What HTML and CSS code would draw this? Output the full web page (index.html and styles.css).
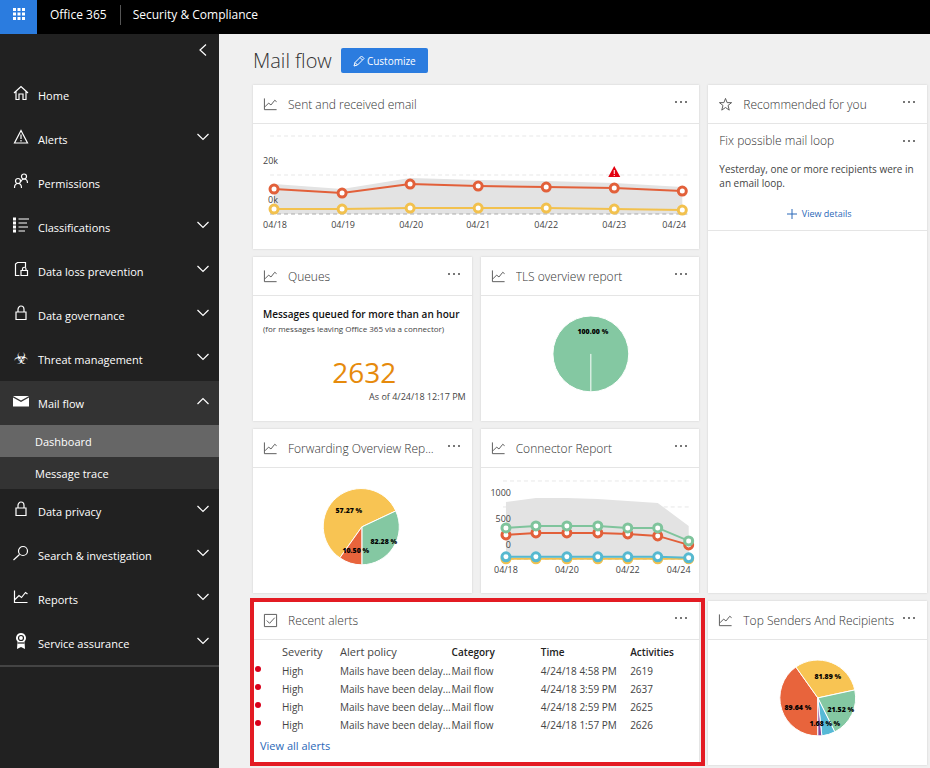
FILE: index.html
```
<!DOCTYPE html>
<html lang="en">
<head>
    <meta charset="UTF-8">
    <meta name="viewport" content="width=device-width, initial-scale=1">
    <title>Mail flow - Security &amp; Compliance</title>
    <link rel="stylesheet" href="styles.css">
</head>
<body>
    <!-- shared icons -->
    <svg class="sprite" aria-hidden="true">
        <symbol id="chart" viewBox="0 0 16 16"><path d="M1.5 1.5v12h13M2 10.5l4-4 2.5 2 4-5 2 1.5"/></symbol>
        <symbol id="down" viewBox="0 0 16 16"><path d="M2.500 5l5.500 5.500L13.500 5"/></symbol>
        <symbol id="up" viewBox="0 0 16 16"><path d="M2.500 11L8 5.500l5.500 5.500"/></symbol>
        <symbol id="left" viewBox="0 0 16 16"><path d="M11 2.500L5 8l6 5.500"/></symbol>
        <symbol id="dots" viewBox="0 0 16 4"><path d="M2 1h2v2H2zM7 1h2v2H7zM12 1h2v2h-2z"/></symbol>
        <symbol id="lock" viewBox="0 0 16 16"><path d="M3 7h10v7.500H3zM5 7V4.500a3 3.500 0 0 1 6 0V7"/></symbol>
    </svg>

    <header class="topbar">
        <button class="launcher" type="button" aria-label="App launcher">
            <svg viewBox="0 0 12 12" width="12" height="12"><path d="M0 0h3v3H0zM4.500 0h3v3h-3zM9 0h3v3H9zM0 4.500h3v3H0zM4.500 4.500h3v3h-3zM9 4.500h3v3H9zM0 9h3v3H0zM4.500 9h3v3h-3zM9 9h3v3H9z"/></svg>
        </button>
        <a class="brand" href="#">Office 365</a>
        <a class="product" href="#">Security &amp; Compliance</a>
    </header>

    <div class="layout">
        <nav class="sidebar">
            <button class="collapse" type="button" aria-label="Collapse menu"><svg class="icon"><use href="#left"/></svg></button>
            <ul class="menu">
                <li><a class="item" href="#"><svg class="icon" viewBox="0 0 16 16"><path d="M1 8l7-6.500L15 8M3 6.500v8h3V9h4v5.500h3v-8"/></svg><span>Home</span></a></li>
                <li><a class="item" href="#"><svg class="icon" viewBox="0 0 16 16"><path d="M8 1.500L14.500 14h-13zM8 5.500v4.500M8 11v1.500"/></svg><span>Alerts</span><svg class="icon arrow"><use href="#down"/></svg></a></li>
                <li><a class="item" href="#"><svg class="icon" viewBox="0 0 16 16"><circle cx="11" cy="3.500" r="2.500"/><circle cx="5" cy="8" r="2.500"/><path d="M8 8.500c.5-1.500 1.500-2.500 3-2.500 2 0 3.500 1.500 3.500 4M1.500 15c0-3 1.500-4.500 3.500-4.500S8.500 12 8.500 15"/></svg><span>Permissions</span></a></li>
                <li><a class="item" href="#"><svg class="icon" viewBox="0 0 16 16"><path d="M5.500 2H16M5.500 6H14M5.500 10H15M5.500 14H12"/><path class="thick" d="M1.500 .5v3M1.500 4.500v3M1.500 8.500v3M1.500 12.500v3"/></svg><span>Classifications</span><svg class="icon arrow"><use href="#down"/></svg></a></li>
                <li><a class="item" href="#"><svg class="icon" viewBox="0 0 16 16"><path d="M6.500 14.500h-4V3l2-1.500h8V6M8 9.500h6.500v5H8zM9.500 9.500V8a1.500 1.500 0 0 1 3.500 0v1.500"/></svg><span>Data loss prevention</span><svg class="icon arrow"><use href="#down"/></svg></a></li>
                <li><a class="item" href="#"><svg class="icon"><use href="#lock"/></svg><span>Data governance</span><svg class="icon arrow"><use href="#down"/></svg></a></li>
                <li><a class="item" href="#"><i class="icon glyph" aria-hidden="true">&#9763;</i><span>Threat management</span><svg class="icon arrow"><use href="#down"/></svg></a></li>
                <li class="open">
                    <a class="item" href="#"><svg class="icon" viewBox="0 0 16 16"><path class="solid" d="M0 3h16L8 7.500zM0 4.500l8 4.500 8-4.500V13.500H0z"/></svg><span>Mail flow</span><svg class="icon arrow"><use href="#up"/></svg></a>
                    <ul class="submenu">
                        <li><a class="active" href="#">Dashboard</a></li>
                        <li><a href="#">Message trace</a></li>
                    </ul>
                </li>
                <li><a class="item" href="#"><svg class="icon"><use href="#lock"/></svg><span>Data privacy</span><svg class="icon arrow"><use href="#down"/></svg></a></li>
                <li><a class="item" href="#"><svg class="icon" viewBox="0 0 16 16"><circle cx="10" cy="6" r="4.500"/><path d="M6.500 9.500L.5 15"/></svg><span>Search &amp; investigation</span><svg class="icon arrow"><use href="#down"/></svg></a></li>
                <li><a class="item" href="#"><svg class="icon"><use href="#chart"/></svg><span>Reports</span><svg class="icon arrow"><use href="#down"/></svg></a></li>
                <li><a class="item" href="#"><svg class="icon" viewBox="0 0 16 16"><path class="solid" d="M8 0a5 5 0 0 1 3.500 8.500L12 16l-4-2-4 2 .5-7.500A5 5 0 0 1 8 0z"/><circle class="ring" cx="8" cy="5" r="2.500"/><path class="ring" d="M4.500 10h7"/></svg><span>Service assurance</span><svg class="icon arrow"><use href="#down"/></svg></a></li>
            </ul>
        </nav>

        <main class="content">
            <div class="page-head">
                <h1>Mail flow</h1>
                <button class="customize" type="button"><svg viewBox="0 0 12 12" width="12" height="12"><path d="M1 11l1-3.500L8.500 1l2.500 2.500L4.500 10zM7 2.500L9.500 5M2 7.500L4.500 10"/></svg>Customize</button>
            </div>

            <div class="cards">
                <section class="card wide">
                    <header><svg class="icon"><use href="#chart"/></svg><h2>Sent and received email</h2><button class="more" type="button" aria-label="More"><svg><use href="#dots"/></svg></button></header>
                    <svg class="plot" viewBox="0 0 446 125">
                        <path class="area" d="M21 60L89 65 157 54 225 56 293 57 361 59 429 63V90H21z"/>
                        <path class="grid" d="M17 12H434M17 51H434"/>
                        <path class="grid base" d="M17 90H434"/>
                        <text x="10" y="40">20k</text>
                        <text x="15" y="79">0k</text>
                        <g class="red"><path d="M21 65L89 69 157 60 225 62 293 63 361 64 429 67"/><circle cx="21" cy="65" r="4"/><circle cx="89" cy="69" r="4"/><circle cx="157" cy="60" r="4"/><circle cx="225" cy="62" r="4"/><circle cx="293" cy="63" r="4"/><circle cx="361" cy="64" r="4"/><circle cx="429" cy="67" r="4"/></g>
                        <g class="yellow"><path d="M21 85L89 85 157 84 225 84 293 84 361 85 429 86"/><circle cx="21" cy="85" r="4"/><circle cx="89" cy="85" r="4"/><circle cx="157" cy="84" r="4"/><circle cx="225" cy="84" r="4"/><circle cx="293" cy="84" r="4"/><circle cx="361" cy="85" r="4"/><circle cx="429" cy="86" r="4"/></g>
                        <path class="warn" d="M361 42l6 11h-12z"/><path class="warn-mark" d="M361 46v4M361 51v1"/>
                        <g class="dates"><text x="22" y="104">04/18</text><text x="90" y="104">04/19</text><text x="158" y="104">04/20</text><text x="225" y="104">04/21</text><text x="293" y="104">04/22</text><text x="361" y="104">04/23</text><text x="421" y="104">04/24</text></g>
                    </svg>
                </section>

                <section class="card tall">
                    <header><svg class="icon" viewBox="0 0 16 16"><path d="M8 1.500l1.700 4.500h4.800l-3.800 3 1.300 5L8 11.200 4 14l1.300-5-3.800-3h4.800z"/></svg><h2>Recommended for you</h2><button class="more" type="button" aria-label="More"><svg><use href="#dots"/></svg></button></header>
                    <div class="tip">
                        <div class="tip-head"><h3>Fix possible mail loop</h3><button class="more" type="button" aria-label="More"><svg><use href="#dots"/></svg></button></div>
                        <p>Yesterday, one or more recipients were in an email loop.</p>
                        <a class="details" href="#"><svg viewBox="0 0 10 10" width="10" height="10"><path d="M5 0v10M0 5h10"/></svg>View details</a>
                    </div>
                </section>

                <section class="card">
                    <header><svg class="icon"><use href="#chart"/></svg><h2>Queues</h2><button class="more" type="button" aria-label="More"><svg><use href="#dots"/></svg></button></header>
                    <div class="queue">
                        <strong>Messages queued for more than an hour</strong>
                        <small>(for messages leaving Office 365 via a connector)</small>
                        <div class="count">2632</div>
                        <div class="asof">As of 4/24/18 12:17 PM</div>
                    </div>
                </section>

                <section class="card">
                    <header><svg class="icon"><use href="#chart"/></svg><h2>TLS overview report</h2><button class="more" type="button" aria-label="More"><svg><use href="#dots"/></svg></button></header>
                    <svg class="plot pie" viewBox="0 0 219 125">
                        <circle class="p-green" cx="110" cy="58" r="38"/>
                        <path class="cut" d="M110 58v38"/>
                        <text x="112" y="38">100.00 %</text>
                    </svg>
                </section>

                <section class="card">
                    <header><svg class="icon"><use href="#chart"/></svg><h2>Forwarding Overview Rep...</h2><button class="more" type="button" aria-label="More"><svg><use href="#dots"/></svg></button></header>
                    <svg class="plot pie" viewBox="0 0 219 125">
                        <path class="p-yellow" d="M109 59L87 90A38 38 0 1 1 143 43z"/>
                        <path class="p-green" d="M109 59L143 43A38 38 0 0 1 109 97z"/>
                        <path class="p-red" d="M109 59V97A38 38 0 0 1 87 90z"/>
                        <text x="96" y="45">57.27 %</text>
                        <text x="131" y="76">82.28 %</text>
                        <text x="103" y="85">10.50 %</text>
                    </svg>
                </section>

                <section class="card">
                    <header><svg class="icon"><use href="#chart"/></svg><h2>Connector Report</h2><button class="more" type="button" aria-label="More"><svg><use href="#dots"/></svg></button></header>
                    <svg class="plot" viewBox="0 0 219 125">
                        <path class="grid" d="M22 13H211M22 39H211"/>
                        <path class="area" d="M25 34L55 30H86L117 31 147 33 177 35 208 58V91H25z"/>
                        <path class="grid base" d="M22 91H211"/>
                        <g class="values"><text x="30" y="28">1000</text><text x="30" y="54">500</text><text x="30" y="80">0</text></g>
                        <g class="yellow"><path d="M25 91H208"/><circle cx="25" cy="91" r="4"/><circle cx="55" cy="91" r="4"/><circle cx="86" cy="91" r="4"/><circle cx="117" cy="91" r="4"/><circle cx="147" cy="91" r="4"/><circle cx="177" cy="91" r="4"/><circle cx="208" cy="91" r="4"/></g>
                        <g class="red"><path d="M25 67L55 65 86 65 117 65 147 66 177 68 208 77"/><circle cx="25" cy="67" r="4"/><circle cx="55" cy="65" r="4"/><circle cx="86" cy="65" r="4"/><circle cx="117" cy="65" r="4"/><circle cx="147" cy="66" r="4"/><circle cx="177" cy="68" r="4"/><circle cx="208" cy="77" r="4"/></g>
                        <g class="green"><path d="M25 60L55 58 86 58 117 58 147 60 177 60 208 73"/><circle cx="25" cy="60" r="4"/><circle cx="55" cy="58" r="4"/><circle cx="86" cy="58" r="4"/><circle cx="117" cy="58" r="4"/><circle cx="147" cy="60" r="4"/><circle cx="177" cy="60" r="4"/><circle cx="208" cy="73" r="4"/></g>
                        <g class="blue"><path d="M25 89H177L208 90"/><circle cx="25" cy="89" r="4"/><circle cx="55" cy="89" r="4"/><circle cx="86" cy="89" r="4"/><circle cx="117" cy="89" r="4"/><circle cx="147" cy="89" r="4"/><circle cx="177" cy="89" r="4"/><circle cx="208" cy="90" r="4"/></g>
                        <g class="dates"><text x="25" y="105">04/18</text><text x="86" y="105">04/20</text><text x="147" y="105">04/22</text><text x="198" y="105">04/24</text></g>
                    </svg>
                </section>

                <section class="card wide marked">
                    <header><svg class="icon" viewBox="0 0 16 16"><path d="M1.500 1.500h13v13h-13zM4 8l3 3 5.500-6"/></svg><h2>Recent alerts</h2><button class="more" type="button" aria-label="More"><svg><use href="#dots"/></svg></button></header>
                    <table class="alerts">
                        <thead>
                            <tr><th class="c-dot"></th><th class="c-severity">Severity</th><th class="c-policy">Alert policy</th><th class="c-category strong">Category</th><th class="c-time strong">Time</th><th class="strong">Activities</th></tr>
                        </thead>
                        <tbody>
                            <tr><td><i class="dot"></i></td><td>High</td><td>Mails have been delay...</td><td>Mail flow</td><td>4/24/18 4:58 PM</td><td>2619</td></tr>
                            <tr><td><i class="dot"></i></td><td>High</td><td>Mails have been delay...</td><td>Mail flow</td><td>4/24/18 3:59 PM</td><td>2637</td></tr>
                            <tr><td><i class="dot"></i></td><td>High</td><td>Mails have been delay...</td><td>Mail flow</td><td>4/24/18 2:59 PM</td><td>2625</td></tr>
                            <tr><td><i class="dot"></i></td><td>High</td><td>Mails have been delay...</td><td>Mail flow</td><td>4/24/18 1:57 PM</td><td>2626</td></tr>
                        </tbody>
                    </table>
                    <a class="all" href="#">View all alerts</a>
                </section>

                <section class="card">
                    <header><svg class="icon"><use href="#chart"/></svg><h2>Top Senders And Recipients</h2><button class="more" type="button" aria-label="More"><svg><use href="#dots"/></svg></button></header>
                    <svg class="plot pie" viewBox="0 0 219 125">
                        <path class="p-red" d="M110 58V96A38 38 0 0 1 88 27z"/>
                        <path class="p-yellow" d="M110 58L88 27A38 38 0 0 1 147 50z"/>
                        <path class="p-green" d="M110 58L147 50A38 38 0 0 1 127 92z"/>
                        <path class="p-blue" d="M110 58L127 92A38 38 0 0 1 114 96z"/>
                        <path class="p-purple" d="M110 58L114 96H110z"/>
                        <text x="120" y="39">81.89 %</text>
                        <text x="90" y="70">89.64 %</text>
                        <text x="133" y="72">21.52 %</text>
                        <text x="113" y="86">1.68 %</text>
                        <text x="129" y="86">%</text>
                    </svg>
                </section>
            </div>
        </main>
    </div>
</body>
</html>
```

FILE: styles.css
```
*{box-sizing:border-box;}
body,h1,h2,h3,p,ul{margin:0;padding:0;}
body{
    display:flex;
    flex-direction:column;
    min-height:100vh;
    font:12px/16px "Open Sans","Noto Sans",sans-serif;
    color:#444;
    background-color:#f0f0f0;
}
ul{list-style:none;}
a{text-decoration:none;}
button{
    padding:0;
    border:none;
    background:none;
    font:inherit;
    cursor:pointer;
}
svg{fill:none;stroke:currentColor;}
.sprite{display:none;}
.icon{
    flex:none;
    width:16px;
    height:16px;
}

/* top bar */
.topbar{
    display:flex;
    align-items:center;
    height:34px;
    padding-bottom:4px;
    background-color:#000;
}
.topbar a{color:#fff;}
.launcher{
    align-self:flex-start;
    display:flex;
    align-items:center;
    justify-content:center;
    width:37px;
    height:34px;
    padding-bottom:6px;
    flex:none;
    background-color:#2b7cdf;
}
.launcher svg{fill:#fff;stroke:none;}
.topbar .brand{
    padding:2px 13px;
    border-right:1px solid #555;
}
.topbar .product{padding:0 12px;}

.layout{
    display:flex;
    flex:1;
}

/* sidebar */
.sidebar{
    flex:none;
    width:219px;
    font-size:11px;
    color:#fff;
    background-color:#212121;
}
.sidebar a{color:#fff;}
.sidebar .icon{stroke-width:1.2;}
.sidebar .glyph{
    font:16px/20px "DejaVu Sans",sans-serif;
    text-align:center;
}
.collapse{
    display:flex;
    width:100%;
    height:39px;
    padding:8px 8px 0 0;
    justify-content:flex-end;
    color:#fff;
}
.menu{
    border-bottom:2px solid #444;
}
.item{
    display:flex;
    align-items:flex-start;
    gap:9px;
    height:44px;
    padding:12px 8px 0 13px;
}
.item span{
    flex:1;
    padding-top:3px;
}
.icon .solid{fill:currentColor;stroke:none;}
.icon .thick{stroke-width:3;}
.icon .ring{stroke:#212121;}
.open{background-color:#333;}
.submenu a{
    display:block;
    height:32px;
    padding:9px 35px 0;
}
.submenu .active{background-color:#666;}

/* page */
.content{
    flex:1;
    min-width:0;
    padding:12px 3px 3px 34px;
}
.page-head{
    display:flex;
    align-items:center;
    gap:9px;
    height:39px;
    padding-bottom:10px;
}
.page-head h1{
    font-size:20px;
    line-height:28px;
    font-weight:300;
    color:#333;
}
.customize{
    display:flex;
    align-items:center;
    justify-content:center;
    gap:2px;
    width:87px;
    height:25px;
    border-radius:2px;
    font-size:10px;
    color:#fff;
    background-color:#2b7cdf;
}
.cards{
    display:grid;
    grid-template-columns:repeat(3,minmax(0,1fr));
    grid-auto-rows:minmax(164px,auto);
    gap:8px 9px;
}

/* cards */
.card{
    position:relative;
    background-color:#fff;
    box-shadow:0 0 2px #ccc;
}
.wide{grid-column:span 2;}
.tall{grid-row:span 3;}
.card header{
    display:flex;
    align-items:center;
    gap:10px;
    height:39px;
    padding:0 10px;
    border-bottom:1px solid #e5e5e5;
}
.card header .icon{
    width:15px;
    height:15px;
    color:#555;
}
.card h2,
.tip h3{
    flex:1;
    overflow:hidden;
    font-size:12px;
    line-height:18px;
    font-weight:300;
    white-space:nowrap;
    text-overflow:ellipsis;
    color:#333;
}
.card h2{
    margin-right:-10px;
    padding-top:2px;
}
.more{
    display:flex;
    flex:none;
    padding-bottom:4px;
    color:#777;
}
.more svg{
    width:16px;
    height:4px;
    fill:currentColor;
    stroke:none;
}

.tip{
    padding:8px 8px 7px 11px;
    border-bottom:1px solid #e5e5e5;
    text-align:center;
}
.tip-head{
    display:flex;
    align-items:center;
    text-align:left;
}
.tip-head .more{
    padding:0 2px 0 0;
}
.tip p{
    margin:12px 0 16px;
    font-size:10px;
    line-height:14px;
    text-align:left;
}
.details{
    display:inline-flex;
    align-items:center;
    gap:5px;
    font-size:9px;
    color:#2b68b8;
}

.queue{
    display:flex;
    flex-direction:column;
    padding:10px 6px 0 10px;
}
.queue strong{
    font-size:10px;
    font-weight:600;
    color:#111;
}
.queue small{
    font-size:8px;
    line-height:14px;
}
.count{
    margin-top:18px;
    font-size:28px;
    line-height:36px;
    text-align:center;
    color:#e68a0c;
}
.asof{
    font-size:9px;
    line-height:14px;
    text-align:right;
}

/* charts */
.plot{
    display:block;
    width:100%;
}
.plot text{
    font-size:9px;
    fill:#444;
    stroke:none;
}
.plot .dates{text-anchor:middle;}
.plot .values{text-anchor:end;}
.area{fill:#e3e3e3;stroke:none;}
.grid{stroke:#e8e8e8;stroke-dasharray:4 3;}
.grid.base{stroke:#aaa;}
.red,.yellow,.green,.blue{stroke-width:2;}
.plot circle{fill:#fff;stroke-width:3;}
.red{stroke:#e2603a;}
.yellow{stroke:#f2c14e;}
.green{stroke:#7fc49c;}
.blue{stroke:#56b9d0;}
.warn{fill:#e3000f;stroke:none;}
.warn-mark{stroke:#fff;}
.pie path,
.pie circle{stroke:#fff;stroke-width:1;}
.pie .p-green{fill:#84c8a2;}
.pie .p-yellow{fill:#f8c453;}
.pie .p-red{fill:#e8643c;}
.pie .p-blue{fill:#56b9d6;}
.pie .p-purple{fill:#8a4a9a;}
.pie text{
    font-size:7px;
    font-weight:800;
    text-anchor:middle;
    fill:#000;
}

/* alerts */
.marked::after{
    content:"";
    position:absolute;
    inset:-3px -6px -1px -3px;
    border:4px solid #e31b23;
    pointer-events:none;
}
.alerts{
    width:100%;
    margin-top:3px;
    border-collapse:collapse;
    table-layout:fixed;
    font-size:10px;
    line-height:18px;
}
.alerts th,
.alerts td{
    padding:0;
    text-align:left;
    font-weight:400;
    white-space:nowrap;
}
.alerts th{
    padding-bottom:1px;
    font-size:11px;
}
.alerts .strong{
    font-size:10px;
    font-weight:600;
    color:#222;
}
.alerts .c-dot{width:29px;}
.alerts .c-severity{width:13%;}
.alerts .c-policy{width:25%;}
.alerts .c-category,
.alerts .c-time{width:20%;}
.dot{
    display:block;
    width:6px;
    height:6px;
    margin:0 0 4px 2px;
    border-radius:50%;
    background-color:#d9001b;
}
.all{
    display:block;
    padding:4px 7px 0;
    font-size:11px;
    color:#2b68b8;
}
```
